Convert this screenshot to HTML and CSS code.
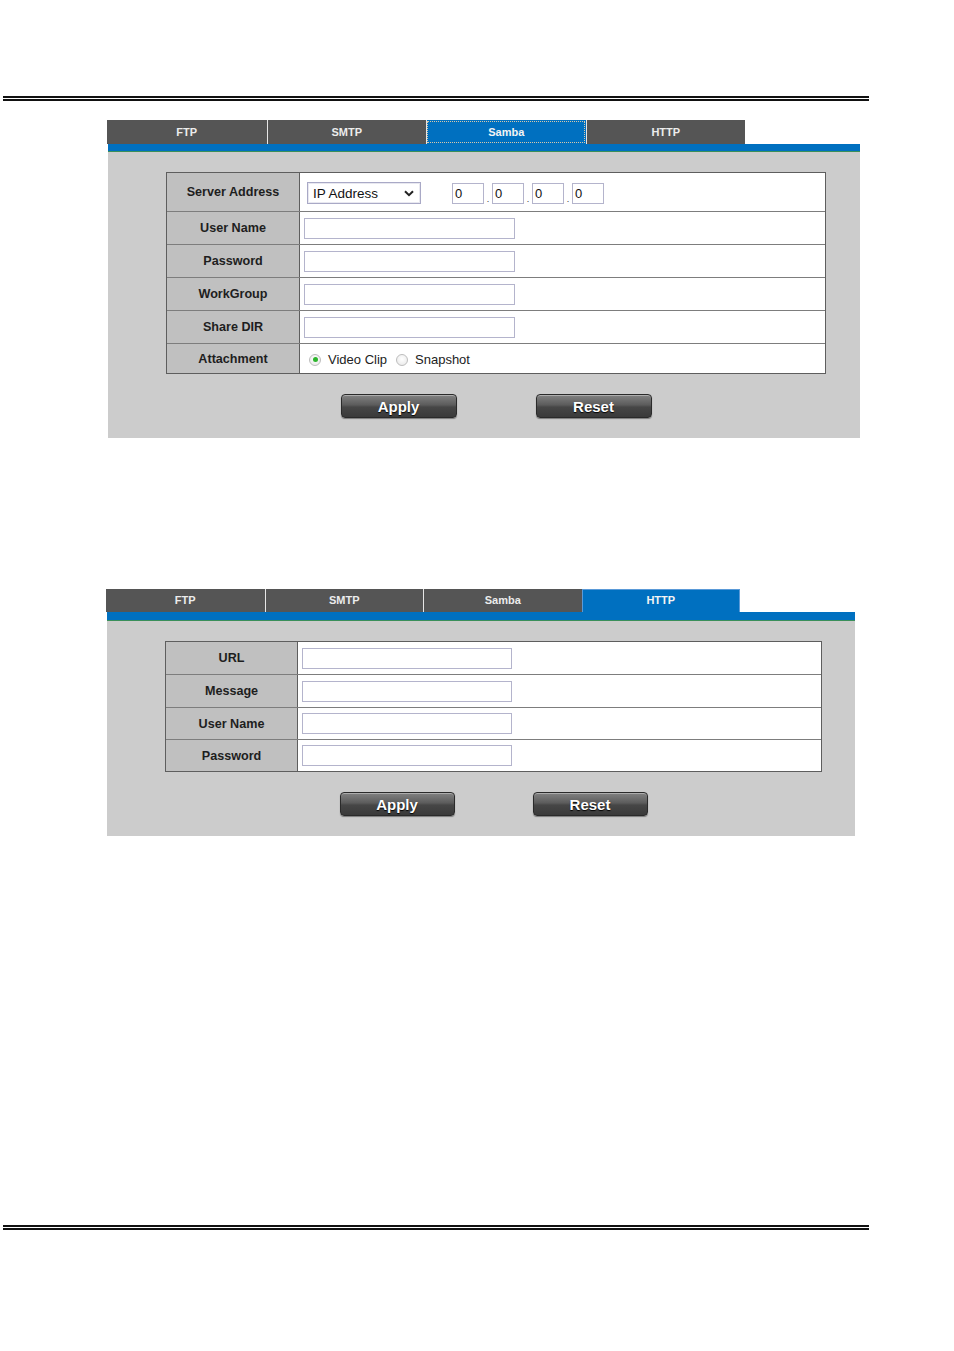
FILE: index.html
```html
<!DOCTYPE html>
<html>
<head>
<meta charset="utf-8">
<link rel="stylesheet" href="styles.css">
</head>
<body>
<div class="rule rule-top"></div>

<section class="panel p1">
  <nav class="tabs">
    <div class="tab">FTP</div>
    <div class="tab">SMTP</div>
    <div class="tab active">Samba</div>
    <div class="tab">HTTP</div>
  </nav>
  <div class="bar"></div>
  <div class="body">
    <div class="form">
      <div class="row r-server">
        <div class="label">Server Address</div>
        <div class="field">
          <span class="select">IP Address<svg class="chev" width="10" height="7" viewBox="0 0 10 7"><path d="M1 1.2 L5 5.2 L9 1.2" fill="none" stroke="#222" stroke-width="2"/></svg></span>
          <span class="ips">
            <span class="ip">0</span><span class="dot">.</span><span class="ip">0</span><span class="dot">.</span><span class="ip">0</span><span class="dot">.</span><span class="ip">0</span>
          </span>
        </div>
      </div>
      <div class="row"><div class="label">User Name</div><div class="field"><span class="input"></span></div></div>
      <div class="row"><div class="label">Password</div><div class="field"><span class="input"></span></div></div>
      <div class="row"><div class="label">WorkGroup</div><div class="field"><span class="input"></span></div></div>
      <div class="row"><div class="label">Share DIR</div><div class="field"><span class="input"></span></div></div>
      <div class="row r-last"><div class="label">Attachment</div>
        <div class="field radios">
          <span class="radio checked"></span><span class="rlabel">Video Clip</span>
          <span class="radio"></span><span class="rlabel">Snapshot</span>
        </div>
      </div>
    </div>
    <div class="actions">
      <button class="btn">Apply</button>
      <button class="btn">Reset</button>
    </div>
  </div>
</section>

<section class="panel p2">
  <nav class="tabs">
    <div class="tab">FTP</div>
    <div class="tab">SMTP</div>
    <div class="tab">Samba</div>
    <div class="tab active2">HTTP</div>
  </nav>
  <div class="bar"></div>
  <div class="body">
    <div class="form">
      <div class="row"><div class="label">URL</div><div class="field"><span class="input"></span></div></div>
      <div class="row"><div class="label">Message</div><div class="field"><span class="input"></span></div></div>
      <div class="row r-32"><div class="label">User Name</div><div class="field"><span class="input"></span></div></div>
      <div class="row r-32 r-last"><div class="label">Password</div><div class="field"><span class="input"></span></div></div>
    </div>
    <div class="actions">
      <button class="btn">Apply</button>
      <button class="btn">Reset</button>
    </div>
  </div>
</section>

<div class="rule rule-bottom"></div>
</body>
</html>
```

FILE: styles.css
```css
html, body {
  margin: 0;
  padding: 0;
  background: #fff;
  font-family: "Liberation Sans", Arial, sans-serif;
}

.rule {
  width: 866px;
  margin-left: 3px;
  height: 1px;
  border-top: 2px solid #111;
  border-bottom: 2px solid #111;
}
.rule-top { margin-top: 96px; }
.rule-bottom { margin-top: 389px; }

.panel { display: flex; flex-direction: column; }
.p1 { margin-left: 107px; width: 753px; margin-top: 19px; }
.p2 { margin-left: 106px; width: 749px; margin-top: 151px; }

.tabs { display: flex; height: 24px; }
.p2 .tabs { height: 23px; }
.tab {
  width: 159.5px;
  box-sizing: border-box;
  background: #555555;
  color: #ececec;
  font-weight: bold;
  font-size: 11px;
  display: flex;
  align-items: center;
  justify-content: center;
  border-left: 1px solid #e6e6e6;
  padding-bottom: 1px;
}
.p2 .tab { width: 158.5px; }
.tab:first-child { border-left: none; }
.tab.active {
  background: #0070c0;
  color: #f4f4f4;
  outline: 1px dotted #d8c8a8;
  outline-offset: -2px;
}
.tab.active2 {
  background: #0070c0;
  color: #f4f4f4;
  border-left: 1px solid #5a9ad8;
  border-right: 1px solid #5a9ad8;
  border-top: 1px solid #5a9ad8;
  padding-bottom: 3px;
}

.bar {
  margin-left: 1px;
  height: 7px;
  background: #0070c0;
  border-bottom: 1px solid #3a8f5a;
}
.p2 .bar { height: 8px; }

.body {
  margin-left: 1px;
  background: #cccccc;
  padding: 20px 0 20px 58px;
}

.form {
  width: 660px;
  box-sizing: border-box;
  border: 1px solid #5e5e5e;
  background: #fff;
}
.p2 .form { width: 657px; }

.row {
  display: grid;
  grid-template-columns: 133px 1fr;
  height: 33px;
  box-sizing: border-box;
  border-bottom: 1px solid #7d7d7d;
}
.p2 .row { grid-template-columns: 132px 1fr; }
.row.r-server { height: 39px; }
.row.r-32 { height: 32px; }
.row.r-last { border-bottom: none; height: 29px; }
.p2 .row.r-last { height: 31px; }

.label {
  background: #c0c0c0;
  border-right: 1px solid #5e5e5e;
  display: flex;
  align-items: center;
  justify-content: center;
  font-weight: bold;
  font-size: 12.6px;
  color: #1e1e1e;
}

.field {
  display: flex;
  align-items: center;
  padding-left: 4px;
}

.input {
  display: block;
  width: 211px;
  height: 21px;
  box-sizing: border-box;
  border: 1px solid #b4b4cc;
  background: #fff;
}
.p2 .input { width: 210px; }

.select {
  position: relative;
  margin-left: 3px;
  width: 114px;
  height: 22px;
  box-sizing: border-box;
  border: 1px solid #a9a9c6;
  box-shadow: inset 0 0 0 1px #e8e8f0;
  font-size: 13.5px;
  color: #111;
  display: flex;
  align-items: center;
  padding-left: 5px;
  margin-top: 2px;
}
.chev { position: absolute; right: 6px; top: 7px; }

.ips { display: flex; align-items: flex-end; margin-left: 31px; margin-top: 2px; }
.ip {
  width: 32px;
  height: 21px;
  box-sizing: border-box;
  border: 1px solid #b4b4cc;
  font-size: 13px;
  color: #111;
  padding-left: 2px;
  line-height: 19px;
}
.dot {
  width: 8px;
  font-size: 9px;
  color: #333;
  text-align: center;
  line-height: 10px;
}

.radios { padding-left: 9px; padding-top: 2px; font-size: 13px; color: #222; }
.radio {
  width: 12px;
  height: 12px;
  box-sizing: border-box;
  border-radius: 50%;
  border: 1px solid #bdbdbd;
  background: radial-gradient(circle at 50% 40%, #fff, #e6e6e6);
  display: flex;
  align-items: center;
  justify-content: center;
}
.radio.checked::after {
  content: "";
  width: 5px;
  height: 5px;
  border-radius: 50%;
  background: #2cb52c;
}
.rlabel { margin-left: 7px; margin-right: 9px; }

.actions {
  width: 660px;
  display: flex;
  justify-content: center;
  gap: 79px;
  margin-top: 20px;
}
.p2 .actions { width: 657px; gap: 78px; }

.btn {
  width: 116px;
  height: 24px;
  box-sizing: border-box;
  border: 1px solid #2a2a2a;
  border-radius: 4px;
  background: linear-gradient(#828282 0%, #5c5c5c 45%, #464646 55%, #3a3a3a 100%);
  box-shadow: inset 0 1px 0 rgba(255,255,255,0.35), 0 1px 1px rgba(0,0,0,0.4);
  color: #fff;
  font-family: "Liberation Sans", Arial, sans-serif;
  font-weight: bold;
  font-size: 15px;
  text-shadow: 0 1px 1px #000;
  padding: 0;
}
.p2 .btn { width: 115px; height: 24px; }
```
